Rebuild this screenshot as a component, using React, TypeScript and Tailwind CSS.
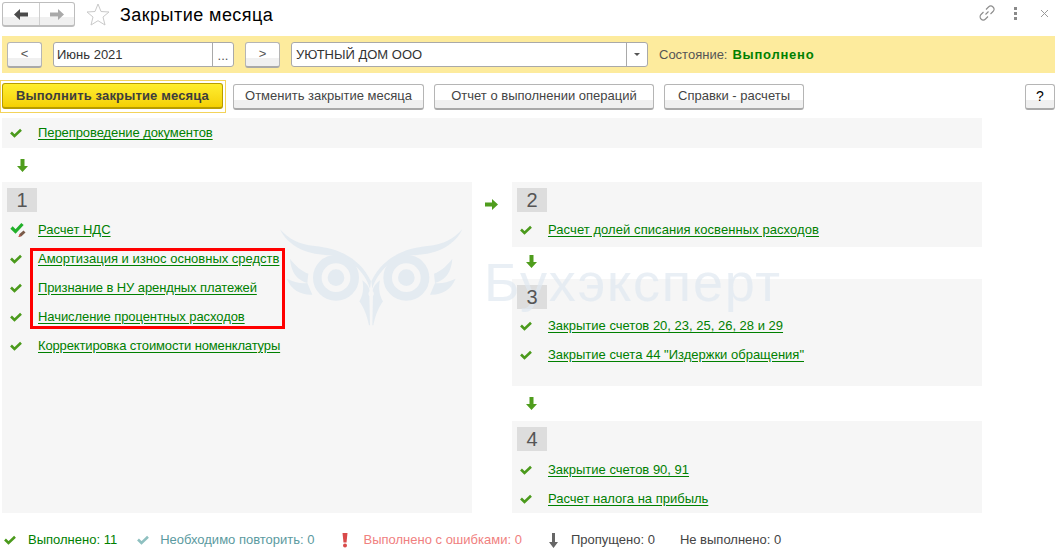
import React from 'react';

const FONT = "font-['Liberation_Sans',Arial,sans-serif]";

const Check = ({ color = '#4b9a1c', className = '' }: { color?: string; className?: string }) => (
  <svg className={`w-[12px] h-[10px] ${className}`} viewBox="0 0 12 10">
    <path d="M1 4.5 L4.5 8 L11 1.8" fill="none" stroke={color} strokeWidth="2.6" />
  </svg>
);

const ArrowDown = () => (
  <svg className="w-[11px] h-[13px]" viewBox="0 0 11 13">
    <path d="M3.5 0h4v7H11L5.5 13 0 7h3.5z" fill="#4f9d1d" />
  </svg>
);

const ArrowRight = () => (
  <svg className="w-[13px] h-[11px]" viewBox="0 0 13 11">
    <path d="M0 3.5h7V0l6 5.5L7 11V7.5H0z" fill="#4f9d1d" />
  </svg>
);

const CheckEdit = () => (
  <svg className="w-[16px] h-[16px] shrink-0" viewBox="0 0 16 16">
    <path d="M1.500 5.500 L5.500 9.500 L12.500 2" fill="none" stroke="#22b02a" strokeWidth="3.2" />
    <path d="M8.500 15 L9.500 12 L13.500 8.500 L15.500 10.500 L11.500 14.200z" fill="#7a5a48" />
    <path d="M8.500 15 L9.500 12.500 L11 14z" fill="#d9534f" />
  </svg>
);

const Row = ({ text, icon, className = '' }: { text: string; icon?: React.ReactNode; className?: string }) => (
  <div className="flex items-center h-[29px]">
    <div className="w-[36px] pl-[8px] flex items-center shrink-0">{icon ?? <Check />}</div>
    <a className={`text-[#008000] underline underline-offset-2 whitespace-nowrap ${className}`}>{text}</a>
  </div>
);

const Badge = ({ n }: { n: string }) => (
  <div className="ml-[5px] mt-[6px] w-[30px] h-[24px] bg-[#dddddd] text-[#555555] text-[20px] leading-[24px] text-center">
    <span className="relative z-10">{n}</span>
  </div>
);

const Btn = ({ children, className = '' }: { children: React.ReactNode; className?: string }) => (
  <button
    className={`h-[26px] rounded-[3px] border border-[#b5b5b5] border-b-[2px] border-b-[#a9a9a9] bg-gradient-to-b from-white from-65% to-[#f0f0f0] to-65% text-[#444444] flex items-center justify-center whitespace-nowrap ${className}`}
  >
    {children}
  </button>
);

// watermark owl, drawn in the coordinates of a 3x crop
const OwlSide = () => (
  <>
    <path d="M15 22 C40 50 70 68 120 72 C180 78 250 100 288 178 L285 200 C270 150 220 100 170 100 C100 100 40 75 15 22z" />
    <path d="M45 110 C60 130 80 148 100 155 L97 183 C78 178 62 165 55 150 C50 140 46 125 45 110z" />
    <path d="M35 170 C60 182 80 185 97 183 L112 218 C80 220 50 205 35 170z" />
    <path d="M262 175 C280 190 286 200 283 215 L285 310 L282 310 C276 278 265 255 253 238 C262 225 268 200 262 175z" />
    <circle cx="183" cy="167" r="56" fill="none" stroke="#e4ebf1" strokeWidth="26" />
    <circle cx="183" cy="167" r="25" />
  </>
);

const Owl = () => (
  <svg className="absolute left-[275px] top-[222px] w-[195px] h-[112px]" viewBox="0 0 585 336" fill="#e4ebf1">
    <OwlSide />
    <g transform="translate(577 0) scale(-1 1)">
      <OwlSide />
    </g>
    <circle cx="288.500" cy="215" r="8" fill="#f6f6f6" />
  </svg>
);

const Legend = ({ icon, text, color }: { icon?: React.ReactNode; text: string; color: string }) => (
  <div className="flex items-center">
    {icon}
    <span className="whitespace-nowrap" style={{ color }}>{text}</span>
  </div>
);

export default function App() {
  return (
    <div className={`relative w-[1060px] h-[554px] overflow-hidden bg-white text-[13px] ${FONT}`}>
      {/* header */}
      <div className="h-[36px] pt-[2px] flex items-start">
        <div className="ml-[2px] w-[73px] h-[25px] rounded-[3px] border border-[#bdbdbd] border-b-[2px] bg-gradient-to-b from-white from-65% to-[#f0f0f0] to-65% flex">
          <div className="w-[37px] border-r border-[#cfcfcf] flex items-center justify-center">
            <svg className="w-[14px] h-[11px]" viewBox="0 0 14 11"><path d="M0 5.5 L6 0v3.5h8v4H6V11z" fill="#4a4a4a" /></svg>
          </div>
          <div className="flex-1 flex items-center justify-center">
            <svg className="w-[14px] h-[11px]" viewBox="0 0 14 11"><path d="M14 5.5 L8 0v3.5H0v4h8V11z" fill="#a9a9a9" /></svg>
          </div>
        </div>
        <svg className="ml-[11px] mt-[1px] w-[24px] h-[23px]" viewBox="0 0 24 23">
          <path d="M12 1 L15 8.5 L23 9 L17 14 L19 22 L12 17.7 L5 22 L7 14 L1 9 L9 8.5z" fill="#fff" stroke="#c9c9c9" />
        </svg>
        <div className="ml-[10px] mt-[1px] text-[18px] leading-[24px] text-black tracking-[0.45px]">Закрытие месяца</div>
        <div className="ml-auto mr-[11px] mt-[3px] flex items-center gap-[19px]">
          <svg className="w-[16px] h-[16px]" viewBox="0 0 16 16" fill="none" stroke="#8c8c8c" strokeWidth="1.1">
            <path d="M6.5 9.5 L9.5 6.5" />
            <path d="M7 4.5 L9.5 2 a3 3 0 0 1 4.5 4.5 L11.5 9" />
            <path d="M9 11.5 L6.500 14 a3 3 0 0 1 -4.5 -4.5 L4.5 7" />
          </svg>
          <div className="flex flex-col gap-[2px]">
            <div className="w-[3px] h-[3px] bg-[#8a8a8a]" />
            <div className="w-[3px] h-[3px] bg-[#8a8a8a]" />
            <div className="w-[3px] h-[3px] bg-[#8a8a8a]" />
          </div>
          <svg className="ml-[4px] w-[9px] h-[9px]" viewBox="0 0 9 9" stroke="#9a9a9a" strokeWidth="1"><path d="M1 1l7 7M8 1l-7 7" /></svg>
        </div>
      </div>

      {/* yellow filter band */}
      <div className="ml-[2px] mr-[5px] h-[37px] bg-[#fdeb9d] flex items-center pl-[5px]">
        <Btn className="w-[35px] !text-[#555]">&lt;</Btn>
        <div className="ml-[11px] w-[181px] h-[25px] rounded-[3px] border border-[#a9a9a9] bg-white flex items-center">
          <span className="flex-1 pl-[3px] text-[#333]">Июнь 2021</span>
          <span className="w-[21px] h-full border-l border-[#a9a9a9] text-center text-[#555] leading-[26px]">...</span>
        </div>
        <Btn className="ml-[11px] w-[35px] !text-[#555]">&gt;</Btn>
        <div className="ml-[11px] w-[357px] h-[25px] rounded-[3px] border border-[#a9a9a9] bg-white flex items-center">
          <span className="flex-1 pl-[4px] text-[#333]">УЮТНЫЙ ДОМ ООО</span>
          <span className="w-[21px] h-full border-l border-[#a9a9a9] flex items-center justify-center">
            <span className="w-0 h-0 border-x-[3px] border-x-transparent border-t-[3px] border-t-[#555]" />
          </span>
        </div>
        <span className="ml-[11px] text-[#555]">Состояние:</span>
        <span className="ml-[5px] text-[#008000] font-bold text-[13px] tracking-[0.75px]">Выполнено</span>
      </div>

      {/* actions */}
      <div className="mt-[7px] h-[33px] flex items-center">
        <div className="w-[226px] h-[33px] border border-[#f3d35a] pl-[1px] pt-[2px]">
          <button className="w-[221px] h-[26px] rounded-[3px] border border-[#b79c00] border-b-[2px] bg-gradient-to-b from-[#ffee2e] to-[#f4d000] text-[#3d3d3d] font-bold tracking-[0.15px] whitespace-nowrap">
            Выполнить закрытие месяца
          </button>
        </div>
        <Btn className="ml-[7px] w-[191px]">Отменить закрытие месяца</Btn>
        <Btn className="ml-[10px] w-[220px]">Отчет о выполнении операций</Btn>
        <Btn className="ml-[10px] w-[140px]">Справки - расчеты</Btn>
        <Btn className="ml-auto mr-[5px] w-[30px] !text-black text-[14px]">?</Btn>
      </div>

      {/* first step */}
      <div className="mt-[5px] ml-[2px] w-[980px] h-[30px] bg-[#f6f6f6] flex items-center">
        <Row text="Перепроведение документов" className="tracking-[-0.08px]" />
      </div>
      <div className="h-[34px] pl-[17px] flex items-center"><ArrowDown /></div>

      {/* step panels */}
      <div className="flex items-start">
        <div className="ml-[2px] w-[470px] h-[331px] bg-[#f6f6f6] flex flex-col">
          <Badge n="1" />
          <div className="mt-[3px]">
            <Row text="Расчет НДС" icon={<CheckEdit />} />
            <Row text="Амортизация и износ основных средств" />
            <Row text="Признание в НУ арендных платежей" className="tracking-[-0.1px]" />
            <Row text="Начисление процентных расходов" className="tracking-[-0.07px]" />
            <Row text="Корректировка стоимости номенклатуры" className="tracking-[-0.14px]" />
          </div>
        </div>
        <div className="w-[40px] pt-[17px] pl-[13px]"><ArrowRight /></div>
        <div className="w-[470px]">
          <div className="h-[65px] bg-[#f6f6f6] flex flex-col">
            <Badge n="2" />
            <div className="mt-[3px]"><Row text="Расчет долей списания косвенных расходов" className="tracking-[0.07px]" /></div>
          </div>
          <div className="h-[32px] pl-[14px] pb-[3px] flex items-center"><ArrowDown /></div>
          <div className="h-[107px] bg-[#f6f6f6] flex flex-col">
            <Badge n="3" />
            <div className="mt-[2px]">
              <Row text="Закрытие счетов 20, 23, 25, 26, 28 и 29" />
              <Row text={'Закрытие счета 44 "Издержки обращения"'} />
            </div>
          </div>
          <div className="h-[35px] pl-[14px] flex items-center"><ArrowDown /></div>
          <div className="h-[92px] bg-[#f6f6f6] flex flex-col">
            <Badge n="4" />
            <div className="mt-[4px]">
              <Row text="Закрытие счетов 90, 91" />
              <Row text="Расчет налога на прибыль" />
            </div>
          </div>
        </div>
      </div>

      {/* legend */}
      <div className="mt-[17px] pl-[4px] h-[20px] flex items-center">
        <Legend icon={<Check className="mr-[12px]" />} text="Выполнено: 11" color="#008000" />
        <Legend icon={<Check color="#8fc0c0" className="ml-[20px] mr-[11px]" />} text="Необходимо повторить: 0" color="#5b9aa0" />
        <Legend
          icon={<svg className="ml-[27px] mr-[16px] w-[6px] h-[15px]" viewBox="0 0 6 15"><path d="M0.5 0h5L4.5 9.5h-3z" fill="#d94a4a" /><circle cx="3" cy="12.5" r="2" fill="#d94a4a" /></svg>}
          text="Выполнено с ошибками: 0"
          color="#f08080"
        />
        <Legend
          icon={<svg className="ml-[27px] mr-[13px] w-[9px] h-[15px]" viewBox="0 0 9 15"><path d="M3 0h3v9h3l-4.5 6L0 9h3z" fill="#666" /></svg>}
          text="Пропущено: 0"
          color="#444444"
        />
        <Legend icon={<span className="ml-[25px]" />} text="Не выполнено: 0" color="#444444" />
      </div>

      {/* watermark */}
      <Owl />
      <div className="absolute left-[484px] top-[254px] text-[54px] leading-[56px] tracking-[1.8px] text-[#dfe8f1]/70 pointer-events-none">Бухэксперт</div>

      {/* red highlight */}
      <div className="absolute left-[30px] top-[248px] w-[255px] h-[81px] border-[3px] border-[#ff0000] pointer-events-none" />
    </div>
  );
}
